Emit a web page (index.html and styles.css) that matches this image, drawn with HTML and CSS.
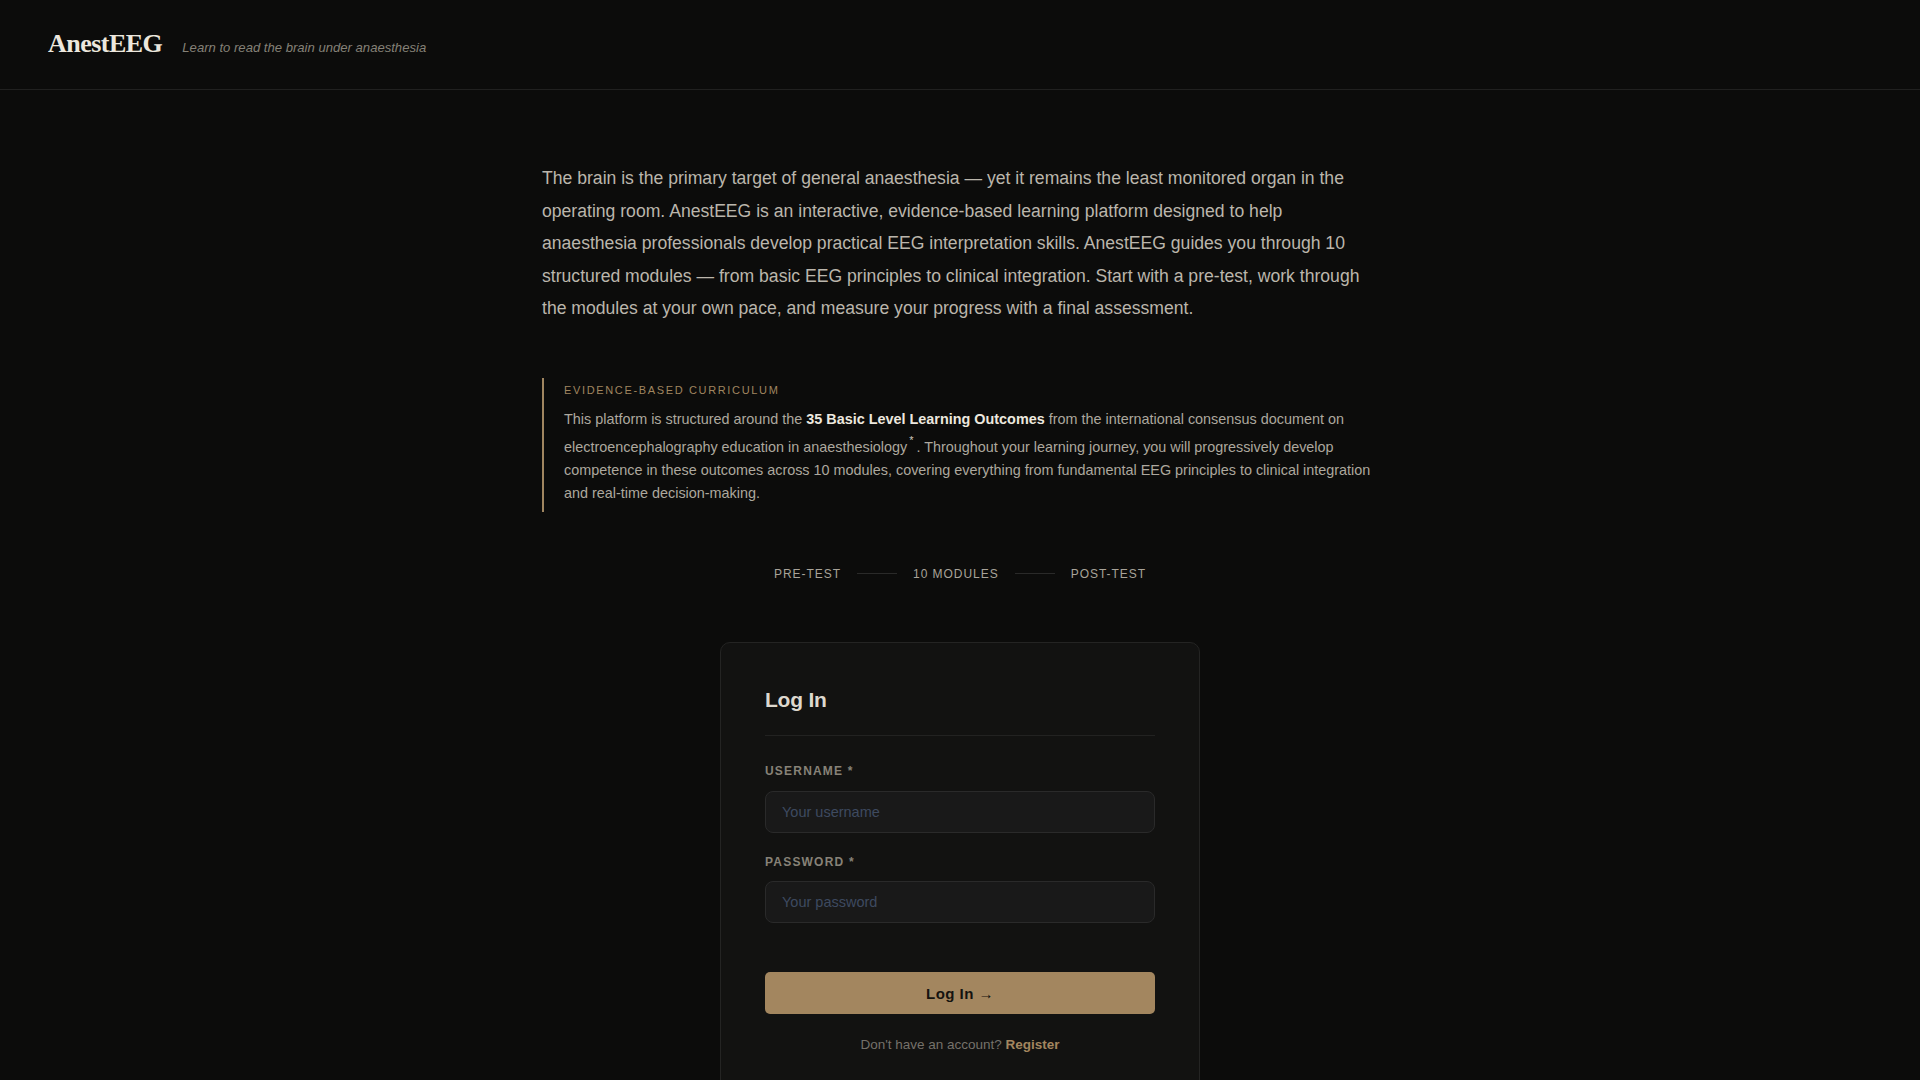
FILE: index.html
```html
<!DOCTYPE html>
<html lang="en">
<head>
    <meta charset="UTF-8">
    <meta name="viewport" content="width=device-width, initial-scale=1.0">
    <title>AnestEEG — Log In</title>
    <link rel="stylesheet" href="styles.css">
</head>
<body>

<header class="site-header">
    <a class="logo" href="#">AnestEEG</a>
    <span class="tagline">Learn to read the brain under anaesthesia</span>
</header>

<main class="container">
    <p class="intro">
        The brain is the primary target of general anaesthesia — yet it remains the least monitored organ in the operating room. AnestEEG is an interactive, evidence-based learning platform designed to help anaesthesia professionals develop practical EEG interpretation skills. AnestEEG guides you through 10 structured modules — from basic EEG principles to clinical integration. Start with a pre-test, work through the modules at your own pace, and measure your progress with a final assessment.
    </p>

    <div class="callout">
        <div class="callout-label">Evidence-based curriculum</div>
        <p>This platform is structured around the <strong>35 Basic Level Learning Outcomes</strong> from the international consensus document on electroencephalography education in anaesthesiology<sup>*</sup>. Throughout your learning journey, you will progressively develop competence in these outcomes across 10 modules, covering everything from fundamental EEG principles to clinical integration and real-time decision-making.</p>
    </div>

    <div class="steps">
        <span>Pre-test</span>
        <span class="step-line"></span>
        <span>10 modules</span>
        <span class="step-line"></span>
        <span>Post-test</span>
    </div>

    <div class="card">
        <h2>Log In</h2>
        <form onsubmit="return false;">
            <div class="field">
                <label for="username">Username *</label>
                <input type="text" id="username" placeholder="Your username">
            </div>
            <div class="field">
                <label for="password">Password *</label>
                <input type="password" id="password" placeholder="Your password">
            </div>
            <button type="submit" class="btn-primary">Log In →</button>
        </form>
        <p class="switch">Don't have an account? <a href="#">Register</a></p>
    </div>
</main>

</body>
</html>
```

FILE: styles.css
```css
body {
    margin: 0;
    font-family: "Liberation Sans", Arial, sans-serif;
    background-color: #0c0c0b;
    color: #b8b3a9;
}

.site-header {
    display: flex;
    align-items: baseline;
    gap: 20px;
    padding: 28px 48px 30px;
    border-bottom: 1px solid #212120;
}

.logo {
    font-family: "Liberation Serif", "Times New Roman", serif;
    font-size: 26px;
    font-weight: bold;
    letter-spacing: -0.02em;
    line-height: 1.2;
    color: #ece7dd;
    text-decoration: none;
}

.tagline {
    font-size: 13.1px;
    font-style: italic;
    color: #858177;
}

.container {
    max-width: 840px;
    margin: 0 auto;
    padding-top: 72px;
}

.intro {
    margin: 0 0 53px 2px;
    font-size: 17.6px;
    line-height: 1.85;
    color: #bbb6ac;
}

.callout {
    border-left: 2px solid #a08660;
    padding: 5px 0 6px 20px;
    margin: 0 0 55px 2px;
}

.callout-label {
    font-size: 11px;
    line-height: 1.4;
    letter-spacing: 0.15em;
    text-transform: uppercase;
    color: #a08660;
    margin-bottom: 10px;
}

.callout p {
    margin: 0;
    font-size: 14.4px;
    line-height: 1.62;
    color: #ada89e;
}

.callout strong {
    color: #ece8df;
}

.callout sup {
    font-size: 11px;
    line-height: 1.62;
    vertical-align: 8px;
    padding: 0 3px 0 2px;
    color: #ccc7bd;
}

.steps {
    display: flex;
    justify-content: center;
    align-items: center;
    gap: 16px;
    font-size: 12px;
    line-height: 1.2;
    letter-spacing: 0.08em;
    text-transform: uppercase;
    color: #a8a399;
    margin-bottom: 61px;
}

.step-line {
    width: 40px;
    height: 1px;
    background-color: #2a2a29;
}

.card {
    width: 480px;
    box-sizing: border-box;
    margin: 0 auto 60px;
    padding: 44px;
    background-color: #121211;
    border: 1px solid #242423;
    border-radius: 10px;
}

.card h2 {
    margin: 0 0 28px;
    padding-bottom: 22px;
    font-size: 21px;
    line-height: 1.25;
    letter-spacing: -0.01em;
    color: #ddd8ce;
    border-bottom: 1px solid #222221;
}

.field {
    margin-bottom: 22px;
}

.field label {
    display: block;
    margin-bottom: 12px;
    font-size: 12px;
    font-weight: bold;
    line-height: 1.2;
    letter-spacing: 0.1em;
    text-transform: uppercase;
    color: #878278;
}

.field input {
    width: 100%;
    height: 42px;
    box-sizing: border-box;
    padding: 0 16px;
    font-family: inherit;
    font-size: 14.5px;
    color: #ddd8ce;
    background-color: #191919;
    border: 1px solid #2a2a2a;
    border-radius: 8px;
    outline: none;
}

.field input::placeholder {
    color: #3e4a60;
}

.btn-primary {
    display: block;
    width: 100%;
    height: 42px;
    margin-top: 49px;
    font-family: inherit;
    font-size: 15px;
    font-weight: bold;
    letter-spacing: 0.03em;
    color: #15130f;
    background-color: #a3865f;
    border: none;
    border-radius: 5px;
    cursor: pointer;
}

.btn-primary:hover {
    background-color: #b0936b;
}

.switch {
    margin: 23px 0 0;
    text-align: center;
    font-size: 13.5px;
    line-height: 1.2;
    color: #75716a;
}

.switch a {
    font-weight: bold;
    color: #a3865f;
    text-decoration: none;
}
```
